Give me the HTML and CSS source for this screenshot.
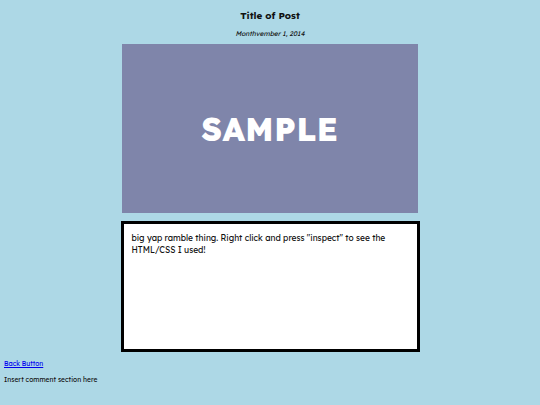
FILE: index.html
```html
<!DOCTYPE html>
<html lang="en">
<head>
  <meta charset="UTF-8" />
  <meta name="viewport" content="width=device-width, initial-scale=1.0" />
  <title>Title of Post</title>
  <link rel="stylesheet" href="styles.css">
</head>
<body>
  <div class="post">
    <h1>Title of Post</h1>
    <p class="date">Monthvember 1, 2014</p>

    <div class="thumb">SAMPLE</div>

    <div class="post-body">
      <p>big yap ramble thing. Right click and press "inspect" to see the HTML/CSS I used!</p>
    </div>
  </div>

  <a href="#" class="back">Back Button</a>
  <p class="comments">Insert comment section here</p>
</body>
</html>
```

FILE: styles.css
```css
body {
  font-family: "Lexend", "Lato", "Noto Sans", sans-serif;
  background-color: lightblue;
  margin: 0;
  padding: 0 4px;
  color: #111;
}
.post {
  display: flex;
  flex-direction: column;
  align-items: center;
}
h1 {
  font-size: 9.8px;
  font-weight: bold;
  margin: 9px 0 0;
  line-height: 12px;
}
.date {
  font-size: 6.7px;
  font-style: italic;
  margin: 9px 0 6px;
  line-height: 8px;
}
.thumb {
  width: 296px;
  height: 169px;
  background-color: #7f85aa;
  color: #fff;
  font-weight: 800;
  font-size: 32px;
  letter-spacing: 0.6px;
  display: flex;
  align-items: center;
  justify-content: center;
}
.post-body {
  width: 293px;
  height: 125px;
  margin-top: 8px;
  background-color: #fff;
  border: 3px solid #000;
}
.post-body p {
  font-size: 8.4px;
  line-height: 12px;
  margin: 8px;
}
.back {
  display: block;
  margin-top: 8px;
  font-size: 6.6px;
  line-height: 8px;
  color: #0000ee;
}
.comments {
  font-size: 6.7px;
  line-height: 8px;
  margin: 8px 0;
}
```
